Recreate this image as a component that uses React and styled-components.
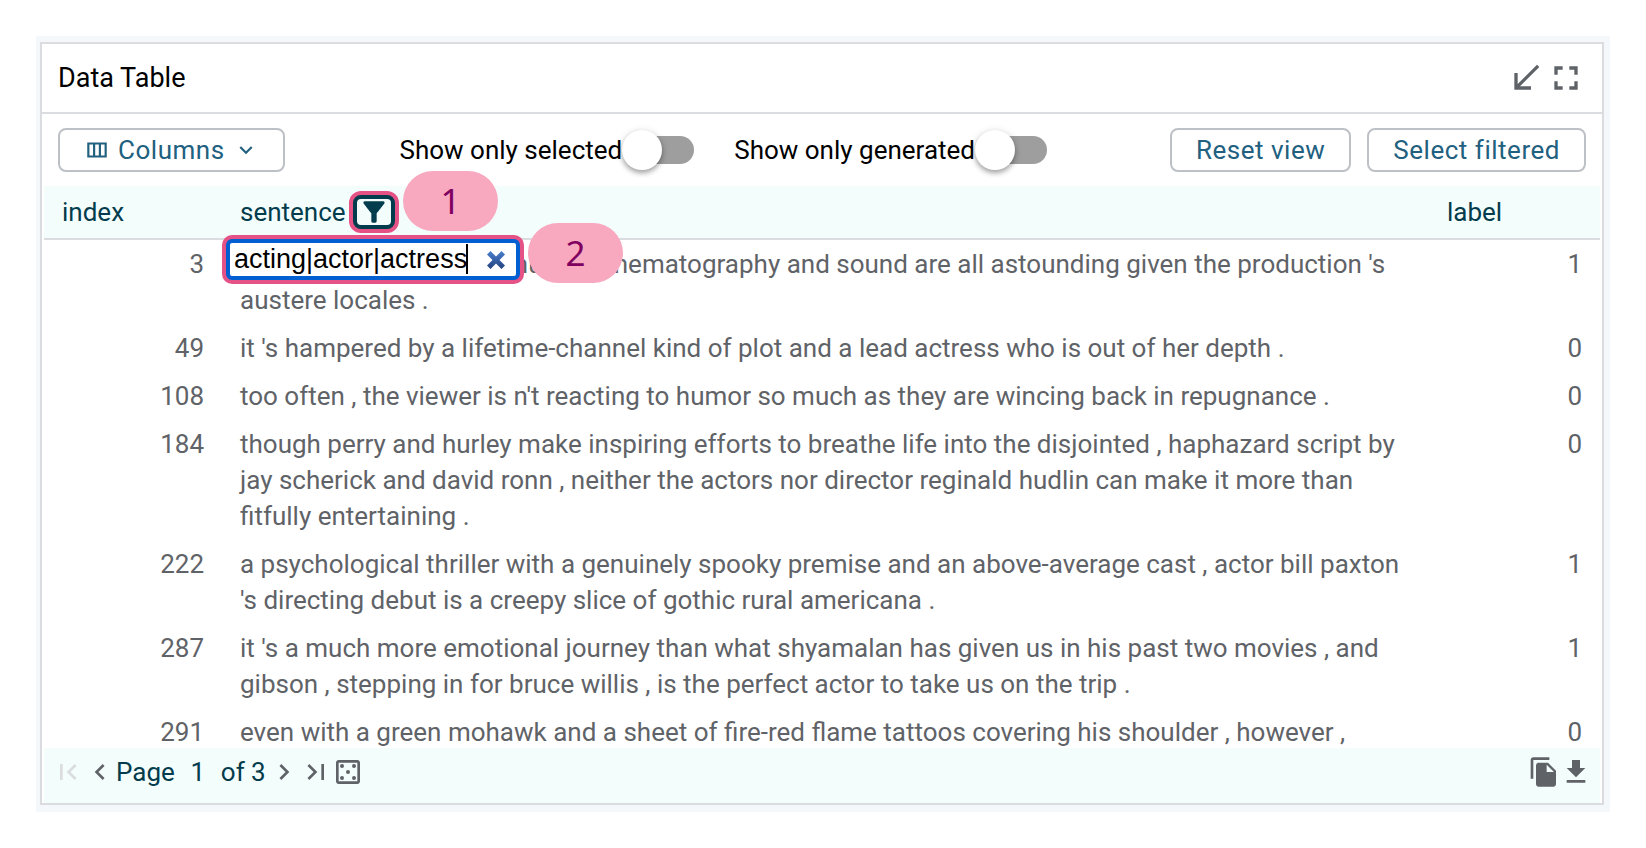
import React, { useState } from "react";
import styled, { createGlobalStyle } from "styled-components";

const GlobalStyle = createGlobalStyle`
  *, *::before, *::after { box-sizing: border-box; }
  body {
    margin: 0;
    background: #fff;
    color: #000;
    font-family: Roboto, "Liberation Sans", sans-serif;
    font-size: 26px;
    line-height: 36px;
  }
  button, input { font: inherit; color: inherit; }
`;

const Page = styled.main`
  display: flex;
  height: 100vh;
  padding: 36px;
`;

const Backdrop = styled.div`
  display: flex;
  flex: 1;
  min-width: 0;
  padding: 6px 6px 7px 4px;
  background: #f4f8fa;
`;

const Panel = styled.section`
  display: flex;
  flex: 1;
  flex-direction: column;
  min-width: 0;
  border: 2px solid #dadce0;
  background: #fff;
`;

const TitleBar = styled.header`
  display: flex;
  align-items: center;
  justify-content: space-between;
  padding: 14px 16px;
  border-bottom: 2px solid #dadce0;
`;

const Title = styled.h2`
  margin: 0;
  font-size: 27px;
  font-weight: 400;
  line-height: 36px;
`;

const Group = styled.div`
  display: flex;
  align-items: center;
  gap: ${(p) => p.$gap || 0}px;
`;

const IconButton = styled.button`
  display: flex;
  padding: 0;
  border: 0;
  background: none;
  color: #5f6368;
  &:disabled { color: #dadce0; }
`;

const Svg = styled.svg`
  display: block;
  flex: none;
  fill: currentColor;
`;

const Toolbar = styled.div`
  display: flex;
  align-items: center;
  justify-content: space-between;
  padding: 14px 16px;
`;

const Switches = styled(Group)`
  margin-right: 8px;
`;

const OutlinedButton = styled.button`
  display: flex;
  align-items: center;
  gap: 8px;
  height: 44px;
  padding: 0 24px;
  border: 2px solid #bdc1c6;
  border-radius: 8px;
  background: #fff;
  color: #21617f;
  letter-spacing: 0.02em;
  white-space: nowrap;
`;

const SwitchLabel = styled.label`
  display: flex;
  align-items: center;
  gap: 8px;
  white-space: nowrap;
`;

const Switch = styled.input`
  appearance: none;
  display: flex;
  align-items: center;
  width: 64px;
  height: 28px;
  margin: 0;
  border-radius: 14px;
  background: #9e9e9e;
  &::before {
    content: "";
    width: 40px;
    height: 40px;
    margin-left: -8px;
    border-radius: 50%;
    background: #fff;
    box-shadow: 0 3px 5px rgba(0, 0, 0, 0.3), 0 1px 8px rgba(0, 0, 0, 0.12);
  }
  &:checked::before { margin-left: 32px; }
`;

const TableArea = styled.div`
  flex: 1;
  min-height: 0;
  margin: 0 2px;
  clip-path: inset(-16px 0 0 0);
`;

const Table = styled.table`
  width: 100%;
  table-layout: fixed;
  border-collapse: separate;
  border-spacing: 0;
`;

const Col = styled.col`
  width: ${(p) => p.$width};
`;

const HeadCell = styled.th`
  position: relative;
  padding: 8px 18px;
  border-bottom: 2px solid #dadce0;
  background: #f3fdfc;
  color: #033c4c;
  font-weight: 400;
  text-align: left;
`;

const Cell = styled.td`
  padding: 6px 18px;
  color: #5f6368;
  text-align: ${(p) => (p.$numeric ? "right" : "left")};
  vertical-align: top;
`;

const FilterButton = styled.button`
  display: flex;
  align-items: center;
  justify-content: center;
  width: 42px;
  height: 34px;
  padding: 0;
  border: 4px solid #033c4c;
  border-radius: 8px;
  background: #f3fdfc;
  box-shadow: 0 0 0 4px #e55286;
`;

const FilterPopup = styled.div`
  position: absolute;
  z-index: 1;
  top: 53px;
  left: 4px;
  display: flex;
  align-items: center;
  width: 294px;
  height: 41px;
  padding: 0 4px 2px;
  border: 4px solid #0060d2;
  border-radius: 6px;
  background: #fff;
  box-shadow: 0 0 0 4px #e55286;
`;

const FilterInput = styled.input`
  width: 232px;
  padding: 0;
  border: 0;
  outline: 0;
  background: none;
  color: #000;
  font-family: "Liberation Sans", Arial, sans-serif;
  font-size: 27px;
  line-height: 30px;
`;

const Caret = styled.span`
  width: 2px;
  height: 30px;
  background: #000;
`;

const ClearButton = styled(IconButton)`
  margin: 2px 6px 0 auto;
`;

const Callout = styled.span`
  position: absolute;
  z-index: 2;
  top: ${(p) => p.$top}px;
  left: ${(p) => p.$left}px;
  width: 95px;
  height: 60px;
  border-radius: 30px;
  background: #f8a9c0;
  color: #800060;
  font-family: "Noto Sans", sans-serif;
  font-size: 35px;
  line-height: 60px;
  text-align: center;
`;

const Footer = styled.footer`
  display: flex;
  align-items: center;
  justify-content: space-between;
  margin: 0 2px;
  padding: 6px 8px 13px;
  background: #f3fdfc;
  color: #033c4c;
`;

const PageField = styled.label`
  display: flex;
  align-items: center;
`;

const PageInput = styled.input`
  width: 46px;
  padding: 0;
  border: 0;
  background: none;
  text-align: center;
`;

const PageCount = styled.span`
  margin-right: 2px;
`;

const PATHS = {
  minimize: "M20 5.41L18.59 4 7 15.59V9H5v10h10v-2H8.41z",
  fullscreen:
    "M7 14H5v5h5v-2H7v-3zm-2-4h2V7h3V5H5v5zm12 7h-3v2h5v-5h-2v3zM14 5v2h3v3h2V5h-5z",
  columns:
    "M3 5v14h18V5H3zm5.33 12H5V7h3.33v10zm5.34 0h-3.33V7h3.33v10zM19 17h-3.33V7H19v10z",
  expand: "M16.59 8.59L12 13.17 7.41 8.59 6 10l6 6 6-6z",
  filter:
    "M4.25 5.61C6.27 8.2 10 13 10 13v6c0 .55.45 1 1 1h2c.55 0 1-.45 1-1v-6s3.72-4.8 5.74-7.39A.998.998 0 0 0 18.95 4H5.04c-.83 0-1.3.95-.79 1.61z",
  first: "M18.41 16.59L13.82 12l4.59-4.59L17 6l-6 6 6 6zM6 6h2v12H6V6z",
  previous: "M15.41 7.41L14 6l-6 6 6 6 1.41-1.41L10.83 12z",
  next: "M10 6L8.59 7.41 13.17 12l-4.58 4.59L10 18l6-6z",
  last: "M5.59 7.41L10.18 12l-4.59 4.59L7 18l6-6-6-6zM16 6h2v12h-2z",
  random:
    "M19 3H5c-1.1 0-2 .9-2 2v14c0 1.1.9 2 2 2h14c1.1 0 2-.9 2-2V5c0-1.1-.9-2-2-2zm0 16H5V5h14v14zM7.5 6a1.5 1.5 0 1 0 0 3 1.5 1.5 0 0 0 0-3zm9 0a1.5 1.5 0 1 0 0 3 1.5 1.5 0 0 0 0-3zM12 10.5a1.5 1.5 0 1 0 0 3 1.5 1.5 0 0 0 0-3zM7.5 15a1.5 1.5 0 1 0 0 3 1.5 1.5 0 0 0 0-3zm9 0a1.5 1.5 0 1 0 0 3 1.5 1.5 0 0 0 0-3z",
  copy: "M16 1H4c-1.1 0-2 .9-2 2v14h2V3h12V1zm-1 4l6 6v10c0 1.1-.9 2-2 2H7.99C6.89 23 6 22.1 6 21V7c0-1.1.89-2 1.99-2h7zm-1 7h5.5L14 6.5V12z",
  download: "M19 9h-4V3H9v6H5l7 7 7-7zM5 18v2h14v-2H5z",
};

function Icon({ name, size = 32 }) {
  return (
    <Svg width={size} height={size} viewBox="0 0 24 24" aria-hidden="true">
      <path d={PATHS[name]} />
    </Svg>
  );
}

function ClearIcon() {
  return (
    <Svg width="20" height="20" viewBox="0 0 20 20" aria-hidden="true">
      <defs>
        <linearGradient id="clear" x1="0" y1="0" x2="0" y2="1">
          <stop offset="0" stopColor="#4a7fd0" />
          <stop offset="1" stopColor="#24437c" />
        </linearGradient>
      </defs>
      <path
        fill="url(#clear)"
        d="M4.5 1L10 6.5 15.5 1 19 4.5 13.5 10 19 15.5 15.5 19 10 13.5 4.5 19 1 15.5 6.5 10 1 4.5z"
      />
    </Svg>
  );
}

const ROWS = [
  [3, "the acting , costumes , music , cinematography and sound are all astounding given the production 's austere locales .", 1],
  [49, "it 's hampered by a lifetime-channel kind of plot and a lead actress who is out of her depth .", 0],
  [108, "too often , the viewer is n't reacting to humor so much as they are wincing back in repugnance .", 0],
  [184, "though perry and hurley make inspiring efforts to breathe life into the disjointed , haphazard script by jay scherick and david ronn , neither the actors nor director reginald hudlin can make it more than fitfully entertaining .", 0],
  [222, "a psychological thriller with a genuinely spooky premise and an above-average cast , actor bill paxton 's directing debut is a creepy slice of gothic rural americana .", 1],
  [287, "it 's a much more emotional journey than what shyamalan has given us in his past two movies , and gibson , stepping in for bruce willis , is the perfect actor to take us on the trip .", 1],
  [291, "even with a green mohawk and a sheet of fire-red flame tattoos covering his shoulder , however ,", 0],
];

export default function App() {
  const [filter, setFilter] = useState("acting|actor|actress");
  const [page, setPage] = useState("1");

  return (
    <>
      <GlobalStyle />
      <Page>
        <Backdrop>
          <Panel>
            <TitleBar>
              <Title>Data Table</Title>
              <Group>
                <IconButton aria-label="Minimize"><Icon name="minimize" size={40} /></IconButton>
                <IconButton aria-label="Full screen"><Icon name="fullscreen" size={40} /></IconButton>
              </Group>
            </TitleBar>
            <Toolbar>
              <OutlinedButton>
                <Icon name="columns" size={26} />
                Columns
                <Icon name="expand" size={26} />
              </OutlinedButton>
              <Switches $gap={40}>
                <SwitchLabel>
                  Show only selected
                  <Switch type="checkbox" role="switch" />
                </SwitchLabel>
                <SwitchLabel>
                  Show only generated
                  <Switch type="checkbox" role="switch" />
                </SwitchLabel>
              </Switches>
              <Group $gap={16}>
                <OutlinedButton>Reset view</OutlinedButton>
                <OutlinedButton>Select filtered</OutlinedButton>
              </Group>
            </Toolbar>
            <TableArea>
              <Table>
                <colgroup>
                  <Col $width="178px" />
                  <Col $width="auto" />
                  <Col $width="171px" />
                </colgroup>
                <thead>
                  <tr>
                    <HeadCell>index</HeadCell>
                    <HeadCell>
                      <Group $gap={7}>
                        sentence
                        <FilterButton aria-label="Filter sentence"><Icon name="filter" /></FilterButton>
                      </Group>
                      <Callout $top={-15} $left={181}>1</Callout>
                      <FilterPopup>
                        <FilterInput
                          aria-label="Sentence filter"
                          value={filter}
                          onChange={(e) => setFilter(e.target.value)}
                        />
                        <Caret />
                        <ClearButton aria-label="Clear filter" onClick={() => setFilter("")}>
                          <ClearIcon />
                        </ClearButton>
                      </FilterPopup>
                      <Callout $top={37} $left={306}>2</Callout>
                    </HeadCell>
                    <HeadCell>label</HeadCell>
                  </tr>
                </thead>
                <tbody>
                  {ROWS.map(([index, sentence, label]) => (
                    <tr key={index}>
                      <Cell $numeric>{index}</Cell>
                      <Cell>{sentence}</Cell>
                      <Cell $numeric>{label}</Cell>
                    </tr>
                  ))}
                </tbody>
              </Table>
            </TableArea>
            <Footer>
              <Group>
                <IconButton aria-label="First page" disabled><Icon name="first" /></IconButton>
                <IconButton aria-label="Previous page"><Icon name="previous" /></IconButton>
                <PageField>
                  Page
                  <PageInput value={page} onChange={(e) => setPage(e.target.value)} />
                </PageField>
                <PageCount>of 3</PageCount>
                <IconButton aria-label="Next page"><Icon name="next" /></IconButton>
                <IconButton aria-label="Last page"><Icon name="last" /></IconButton>
                <IconButton aria-label="Random page"><Icon name="random" /></IconButton>
              </Group>
              <Group>
                <IconButton aria-label="Copy"><Icon name="copy" /></IconButton>
                <IconButton aria-label="Download"><Icon name="download" /></IconButton>
              </Group>
            </Footer>
          </Panel>
        </Backdrop>
      </Page>
    </>
  );
}
